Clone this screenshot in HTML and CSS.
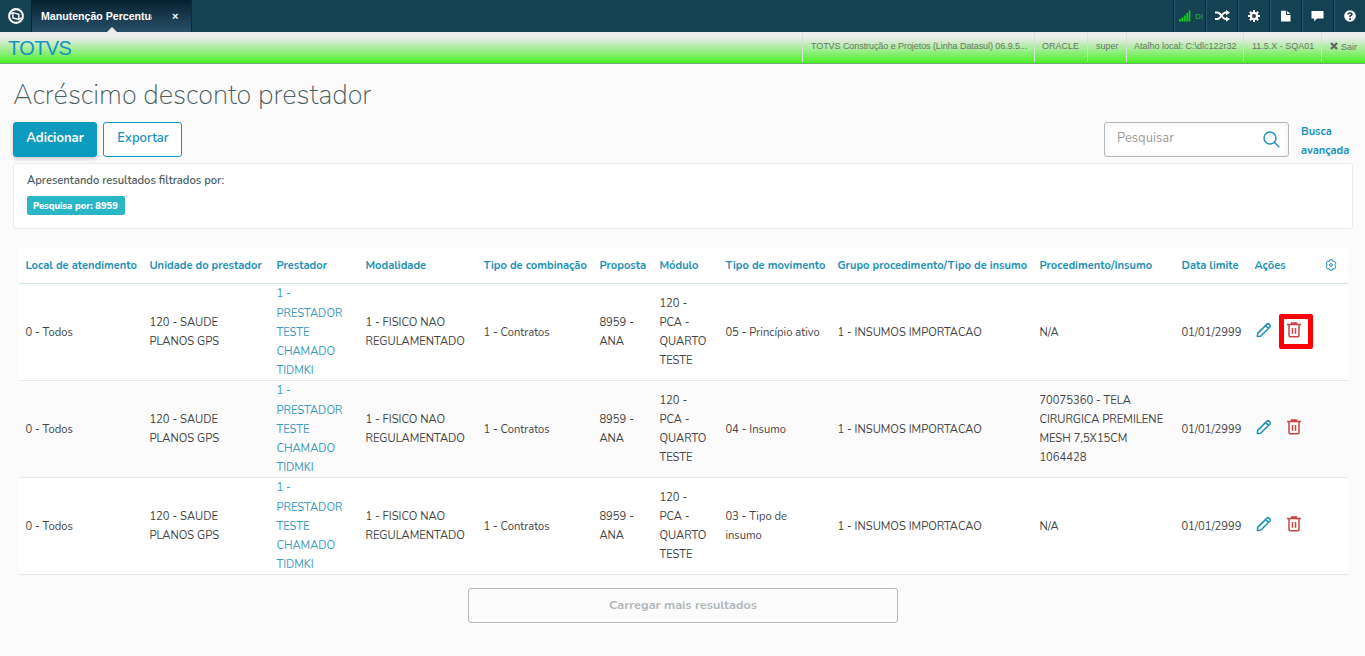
FILE: index.html
```html
<!DOCTYPE html>
<html lang="pt-BR">
<head>
<meta charset="utf-8">
<title>Manutenção Percentual</title>
<link rel="stylesheet" href="styles.css">
</head>
<body>
<svg class="defs" width="0" height="0">
  <symbol id="pencil" viewBox="0 0 16 16"><path d="M1.4 14.6 1.7 11.4 11 2.1Q12 1.2 13 2.1L13.9 3Q14.8 4 13.9 5L4.6 14.3ZM9.6 3.6l2.8 2.8" fill="none" stroke="currentColor" stroke-width="1.5" stroke-linejoin="round"/></symbol>
  <symbol id="trash" viewBox="0 0 14 16"><path d="M0 2.5h14M2 2.8v10.7q0 1.2 1.2 1.2h7.6q1.2 0 1.2-1.2V2.8M4.5 2V1h5v1M5.5 6v5.7M8.5 6v5.7" fill="none" stroke="currentColor" stroke-width="1.5"/></symbol>
</svg>
<header class="topbar">
  <div class="logo"><svg width="16" height="16" viewBox="0 0 16 16"><circle cx="8" cy="8" r="6.9" fill="none" stroke="#fff" stroke-width="2.1"/><path d="M4.9 4.6 10.8 6.2V11.5L4.9 9.9ZM2.5 6.2 4.9 4.6M10.8 11.5l2.6-1.6" fill="none" stroke="#fff" stroke-width="1.4"/></svg></div>
  <div class="tab"><span class="tab-title">Manutenção Percentual</span><span class="tab-close">×</span></div>
  <nav class="tools">
    <div class="tool signal"><svg width="12" height="12" viewBox="0 0 12 12" fill="#14c814"><path d="M0 9h1.8v2.5H0zM2.3 7.5h2v4h-2zM4.8 5.5h2v6h-2zM7.3 3h1.8v8.5H7.3zM9.6.5h1.8v11H9.6z"/></svg><span>DI</span></div>
    <div class="tool"><svg width="15" height="12" viewBox="0 0 15 12"><path d="M0 2.5h2.5C6 2.5 7 9 10.5 9H12M0 9h2.5C6 9 7 2.5 10.5 2.5H12" fill="none" stroke="#fff" stroke-width="1.8"/><path d="M11 0l4 2.6-4 2.6zM11 6.4 15 9l-4 2.7z" fill="#fff"/></svg></div>
    <div class="tool"><svg width="12" height="12" viewBox="0 0 12 12"><circle cx="6" cy="6" r="3.1" fill="none" stroke="#fff" stroke-width="2.3"/><path d="M6 0v2.5M6 9.5V12M0 6h2.5M9.5 6H12M1.8 1.8l1.7 1.7M8.5 8.5l1.7 1.7M10.2 1.8 8.5 3.5M3.5 8.5l-1.7 1.7" stroke="#fff" stroke-width="2"/></svg></div>
    <div class="tool"><svg width="10" height="12" viewBox="0 0 10 12" fill="#fff"><path d="M0 .7h5V5h4.5v6.5H0zM6 .7 9.5 4H6z"/></svg></div>
    <div class="tool"><svg width="13" height="12" viewBox="0 0 13 12" fill="#fff"><path d="M.5 1h12v7.5H6L3.2 11.5v-3H.5z"/></svg></div>
    <div class="tool"><svg width="12" height="12" viewBox="0 0 12 12"><circle cx="6" cy="6" r="5.8" fill="#fff"/><path d="M4.1 4.6Q4.1 3 6 3t1.9 1.5Q7.9 5.4 6 6v1.3M6 8.3V10" fill="none" stroke="#154154" stroke-width="1.6"/></svg></div>
  </nav>
</header>
<div class="brandbar">
  <div class="brand">TOTVS</div>
  <div class="info company">TOTVS Construção e Projetos (Linha Datasul) 06.9.5...</div>
  <div class="info oracle">ORACLE</div>
  <div class="info user">super</div>
  <div class="info path">Atalho local: C:\dlc122r32</div>
  <div class="info version">11.5.X - SQA01</div>
  <div class="info exit"><svg width="8" height="8" viewBox="0 0 8 8"><path d="M1 1l6 6M7 1 1 7" stroke="#666" stroke-width="2.3"/></svg>Sair</div>
</div>
<main>
  <h1>Acréscimo desconto prestador</h1>
  <div class="actions">
    <button class="btn primary">Adicionar</button>
    <button class="btn export">Exportar</button>
    <div class="search"><span>Pesquisar</span><svg width="17" height="17" viewBox="0 0 17 17"><circle cx="7" cy="7" r="6" fill="none" stroke="#1a8fc0" stroke-width="1.4"/><path d="m11.3 11.3 5 5" stroke="#1a8fc0" stroke-width="1.5"/></svg></div>
    <a class="advanced">Busca<br>avançada</a>
  </div>
  <section class="filter">
    <p>Apresentando resultados filtrados por:</p>
    <span class="tag">Pesquisa por: 8959</span>
  </section>
  <table>
    <colgroup><col class="c1"><col class="c2"><col class="c3"><col class="c4"><col class="c5"><col class="c6"><col class="c7"><col class="c8"><col class="c9"><col class="c10"><col class="c11"><col class="c12"><col class="c13"></colgroup>
    <thead><tr><th>Local de atendimento</th><th>Unidade do prestador</th><th>Prestador</th><th>Modalidade</th><th>Tipo de combinação</th><th>Proposta</th><th>Módulo</th><th>Tipo de movimento</th><th>Grupo procedimento/Tipo de insumo</th><th>Procedimento/Insumo</th><th>Data limite</th><th>Ações</th><th><svg class="gear" width="12" height="12" viewBox="0 0 12 12" fill="none" stroke="currentColor"><path d="M4.7.8h2.6l.5 1.5 1.7-.3 1.3 2.2L9.8 6l1 1.8-1.3 2.2-1.7-.3-.5 1.5H4.7l-.5-1.5-1.7.3-1.3-2.2 1-1.8-1-1.8L2.5 2l1.7.3Z" stroke-linejoin="round"/><circle cx="6" cy="6" r="1.4"/></svg></th></tr></thead>
    <tbody>
      <tr><td>0 - Todos</td><td>120 - SAUDE<br>PLANOS GPS</td><td class="link">1 -<br>PRESTADOR<br>TESTE<br>CHAMADO<br>TIDMKI</td><td>1 - FISICO NAO<br>REGULAMENTADO</td><td>1 - Contratos</td><td>8959 -<br>ANA</td><td>120 -<br>PCA -<br>QUARTO<br>TESTE</td><td>05 - Princípio ativo</td><td>1 - INSUMOS IMPORTACAO</td><td>N/A</td><td>01/01/2999</td><td><div class="icons"><svg class="edit"><use href="#pencil"/></svg><span class="remove marked"><svg><use href="#trash"/></svg></span></div></td><td></td></tr>
      <tr><td>0 - Todos</td><td>120 - SAUDE<br>PLANOS GPS</td><td class="link">1 -<br>PRESTADOR<br>TESTE<br>CHAMADO<br>TIDMKI</td><td>1 - FISICO NAO<br>REGULAMENTADO</td><td>1 - Contratos</td><td>8959 -<br>ANA</td><td>120 -<br>PCA -<br>QUARTO<br>TESTE</td><td>04 - Insumo</td><td>1 - INSUMOS IMPORTACAO</td><td>70075360 - TELA<br>CIRURGICA PREMILENE<br>MESH 7,5X15CM<br>1064428</td><td>01/01/2999</td><td><div class="icons"><svg class="edit"><use href="#pencil"/></svg><span class="remove"><svg><use href="#trash"/></svg></span></div></td><td></td></tr>
      <tr><td>0 - Todos</td><td>120 - SAUDE<br>PLANOS GPS</td><td class="link">1 -<br>PRESTADOR<br>TESTE<br>CHAMADO<br>TIDMKI</td><td>1 - FISICO NAO<br>REGULAMENTADO</td><td>1 - Contratos</td><td>8959 -<br>ANA</td><td>120 -<br>PCA -<br>QUARTO<br>TESTE</td><td>03 - Tipo de<br>insumo</td><td>1 - INSUMOS IMPORTACAO</td><td>N/A</td><td>01/01/2999</td><td><div class="icons"><svg class="edit"><use href="#pencil"/></svg><span class="remove"><svg><use href="#trash"/></svg></span></div></td><td></td></tr>
    </tbody>
  </table>
  <button class="more">Carregar mais resultados</button>
</main>
</body>
</html>
```
FILE: styles.css
```css
* { box-sizing: border-box; }
body { margin: 0; background: #fbfbfb; font-family: Nunito, Lato, sans-serif; color: #444; height: 656px; overflow: hidden; }
.defs { position: absolute; }
.topbar { height: 32px; background: #154154; display: flex; color: #fff; }
.logo { width: 32px; display: flex; align-items: center; padding-left: 8px; border-right: 1px solid #0a2636; }
.tab { position: relative; width: 160px; display: flex; align-items: center; padding-left: 9px; background: linear-gradient(#06202f, #285169); border-right: 1px solid #0c2b3b; font: bold 10.6px "Liberation Sans", sans-serif; }
.tab::after { content: ""; position: absolute; left: 75px; bottom: 0; border: 5px solid transparent; border-top: 0; border-bottom-color: #eee; }
.tab-title { width: 111px; overflow: hidden; white-space: nowrap; }
.tab-close { margin-left: 20px; font-size: 11px; }
.tools { margin-left: auto; display: flex; }
.tool { width: 32px; border-left: 1px solid #082b3c; box-shadow: inset 1px 0 #26536a; display: flex; align-items: center; justify-content: center; }
.tool:nth-child(2) { padding-left: 2px; }
.signal { gap: 4px; padding-left: 3px; color: #14c814; font: 7.5px "Liberation Sans", sans-serif; }
.signal span { padding-top: 1px; }
.brandbar { height: 32px; display: flex; background: linear-gradient(#eee 0, #ececec 18%, #55ef36 94%, #42ee25 100%); border-bottom: 1px solid #75a875; color: #6d776d; font: 9px "Liberation Sans", sans-serif; white-space: nowrap; }
.brand { flex: 1; padding-left: 8px; font-size: 20px; letter-spacing: -.6px; line-height: 32px; color: #1593c4; }
.info { height: 30px; border-left: 1px solid #d5e3d2; padding: 9px 0 0 7px; line-height: 10px; }
.company { width: 232px; font-size: 9px; letter-spacing: -.07px; padding-left: 8px; }
.oracle { width: 53px; }
.user { width: 39px; padding-left: 8px; }
.path { width: 117px; }
.version { width: 78px; padding-left: 8px; }
.exit { width: 44px; padding-left: 8px; padding-top: 10px; }
.exit svg { margin-right: 3px; }
main { padding: 0 12px 0 13px; }
h1 { margin: 0; height: 58px; font-weight: 200; font-size: 27.3px; line-height: 62px; color: #4a5c60; }
.actions { display: flex; height: 35px; }
.btn { height: 35px; border-radius: 3px; border: 1px solid #0c9abe; font-family: inherit; font-weight: bold; font-size: 13px; padding: 0 0 3px; }
.primary { width: 84px; background: #0c9abe; color: #fff; box-shadow: 0 2px 4px #0003; }
.export { width: 79px; margin-left: 6px; padding-left: 1px; background: #fff; color: #1593b9; font-weight: 650; }
.search { margin-left: auto; width: 185px; border: 1px solid #b2b8bb; border-radius: 3px; background: #fff; box-shadow: inset 0 0 6px #0001; display: flex; justify-content: space-between; padding: 8px 8px 0 12px; font-size: 13px; line-height: 15px; color: #999; }
.advanced { width: 52px; margin-left: 12px; font-weight: 700; font-size: 11.1px; line-height: 19px; color: #1593b9; }
.filter { height: 66px; margin-top: 6px; padding: 9px 13px; background: #fff; border: 1px solid #eaeaea; border-radius: 3px; }
.filter p { margin: 0; font-size: 11.2px; font-weight: 650; line-height: 16px; color: #4a5c60; }
.tag { display: block; width: 98px; height: 19px; margin-top: 7px; padding-left: 6px; border-radius: 2px; background: #29b6c5; color: #fff; font-weight: 800; font-size: 9.4px; line-height: 20px; white-space: nowrap; }
table { width: 1329px; margin: 19px 0 0 6px; table-layout: fixed; border-spacing: 0; background: #fff; font-size: 11.2px; white-space: nowrap; }
.c1 { width: 124px; } .c2 { width: 127px; } .c3 { width: 89px; } .c4 { width: 118px; } .c5 { width: 116px; } .c6 { width: 60px; } .c7 { width: 66px; } .c8 { width: 112px; } .c9 { width: 202px; } .c10 { width: 142px; } .c11 { width: 73px; } .c12 { width: 70px; } .c13 { width: 30px; }
th, td { padding: 0 0 0 6.4px; text-align: left; }
th:last-child { padding-left: 7px; }
th { height: 36px; border-bottom: 1px solid #c9e9ec; color: #1e91b8; font-size: 11.15px; font-weight: 670; }
td { height: 97px; border-bottom: 1px solid #e6e8e9; padding-top: .4px; line-height: 19.1px; color: #444; }
tbody tr:nth-child(2) { background: #fbfbfb; }
.link { color: #3a9abf; }
.gear { display: block; margin-top: -2px; }
.icons { display: flex; align-items: center; height: 35px; margin: -1.4px 0 0 .6px; }
.edit { width: 16px; height: 16px; margin: -3px 0 0 1px; color: #1b91bb; }
.remove { display: flex; width: 34px; height: 35px; margin-left: 7px; padding: 8px 0 0 8px; color: #c84545; }
.remove svg { width: 14px; height: 16px; }
.marked { border: 5px solid #fe0000; border-radius: 2px; padding: 3px 0 0 3px; }
.more { display: block; width: 430px; height: 35px; margin: 13px auto 0 455px; padding: 0 0 2px; border: 1px solid #b4bcbf; border-radius: 3px; background: #fbfbfb; color: #b2b9bb; font-family: inherit; font-weight: 700; font-size: 12.7px; }
```
